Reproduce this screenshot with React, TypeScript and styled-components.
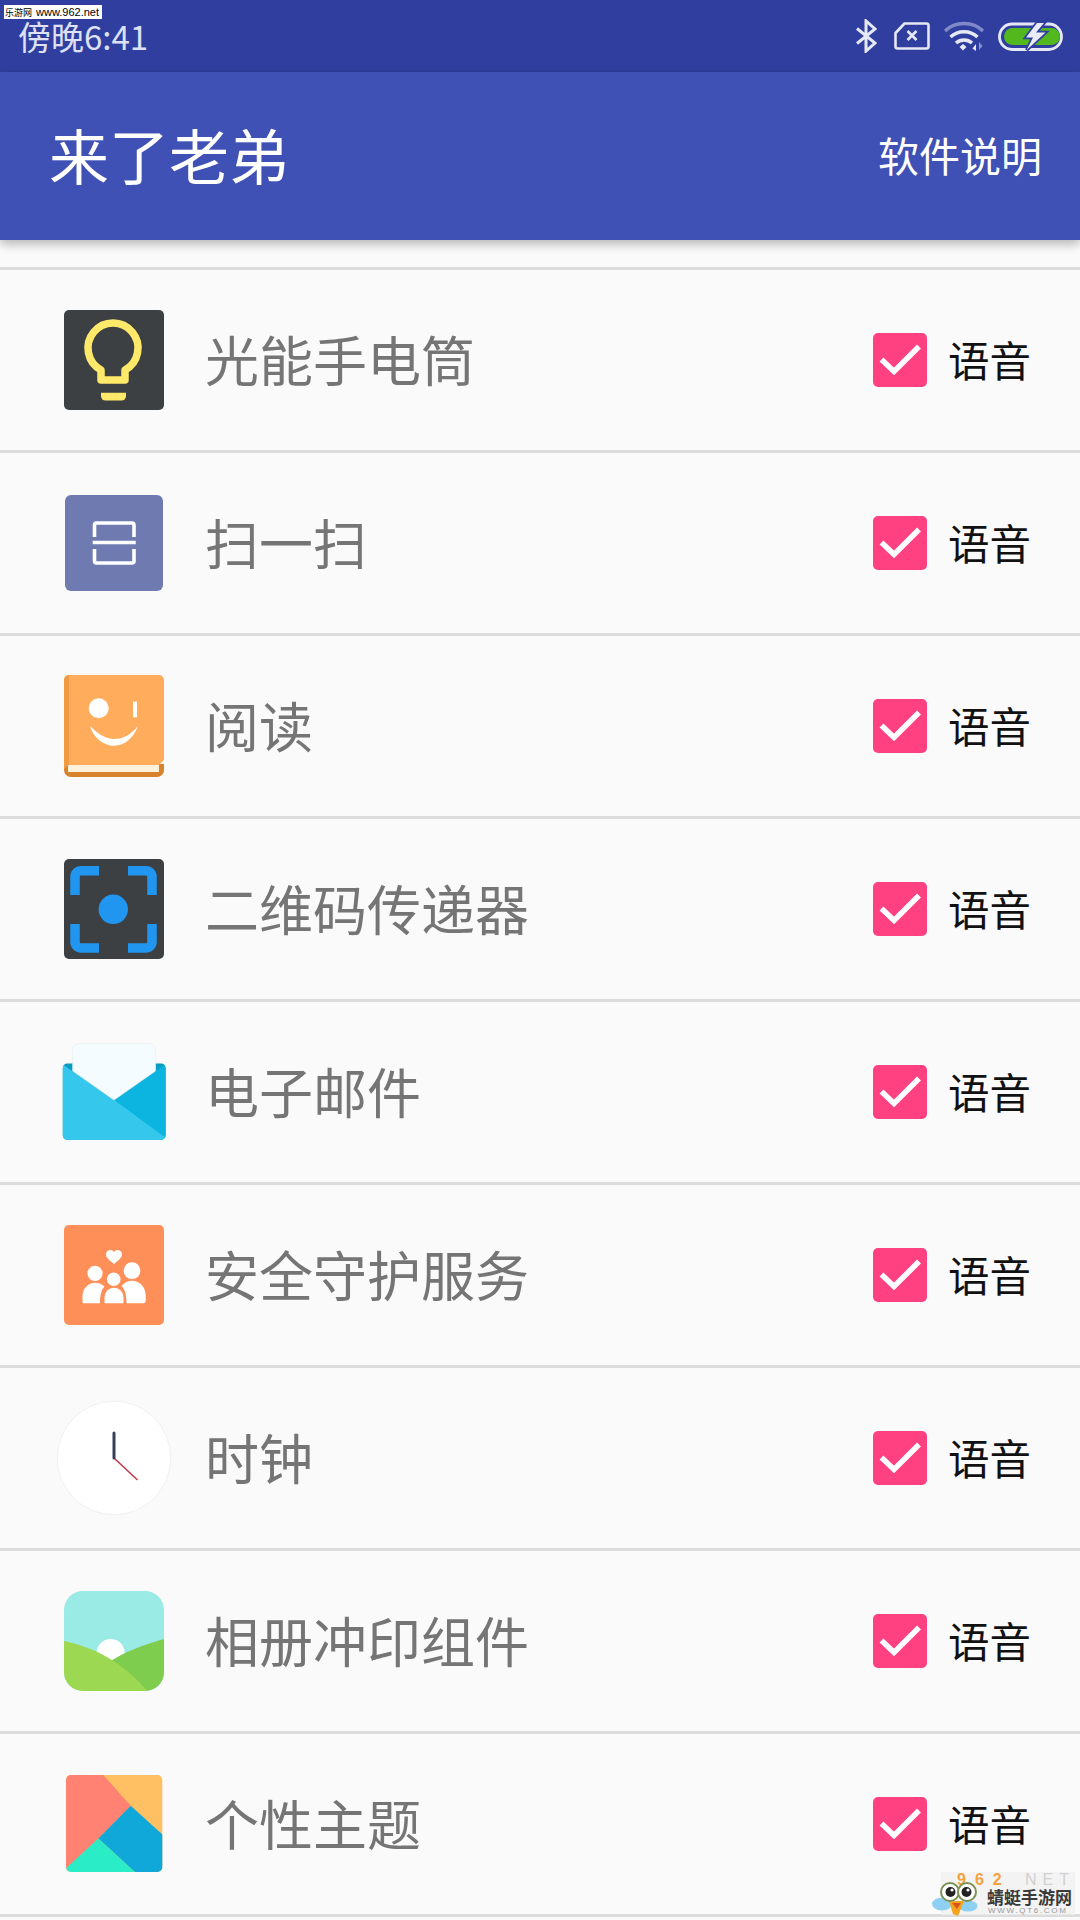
import React from "react";
import styled, { createGlobalStyle } from "styled-components";

const GlobalStyle = createGlobalStyle`
  html, body {
    margin: 0;
    padding: 0;
    background: #fafafa;
  }
  * {
    box-sizing: border-box;
  }
`;

const cjk = `"Noto Sans CJK SC", "Noto Sans", sans-serif`;

const Screen = styled.div`
  position: relative;
  width: 1080px;
  height: 1920px;
  overflow: hidden;
  background: #fafafa;
  font-family: ${cjk};
`;

const StatusBar = styled.div`
  height: 72px;
  background: #303f9f;
  display: flex;
  align-items: center;
  justify-content: space-between;
  padding: 0 16px 0 18px;
`;

const Time = styled.div`
  color: #dde1f3;
  font-size: 33px;
  line-height: 28px;
  font-family: "Noto Sans CJK SC", Roboto, sans-serif;
`;

const StatusIcons = styled.div`
  display: flex;
  align-items: center;
  gap: 13px;
`;

const SiteTag = styled.div`
  position: absolute;
  left: 4px;
  top: 5px;
  width: 98px;
  height: 14px;
  background: #fff;
  color: #000;
  font-family: "Liberation Sans", ${cjk};
  font-size: 11px;
  line-height: 14px;
  white-space: nowrap;
  padding-left: 1px;
`;

const SiteTagName = styled.span`
  font-size: 9px;
  margin-right: 4px;
`;

const Toolbar = styled.header`
  position: relative;
  height: 168px;
  background: #3f51b5;
  display: flex;
  align-items: center;
  justify-content: space-between;
  padding: 0 38px 4px 49px;
  color: #fff;
  box-shadow: 0 4px 10px rgba(0, 0, 0, 0.28);
`;

const Title = styled.div`
  font-size: 60px;
  line-height: 80px;
`;

const ToolbarAction = styled.div`
  font-size: 41px;
  line-height: 60px;
`;

const List = styled.div`
  padding-top: 27px;
`;

const Row = styled.div`
  height: 183px;
  border-top: 3px solid #dcdcdc;
  display: flex;
  align-items: center;
  padding: 0 49px 0 54px;
`;

const IconSlot = styled.svg`
  width: 120px;
  height: 120px;
  flex: none;
`;

const Label = styled.div`
  flex: 1;
  margin-left: 31px;
  padding-bottom: 3px;
  font-size: 54px;
  line-height: 70px;
  color: #757575;
`;

const CheckBox = styled.div`
  width: 54px;
  height: 54px;
  border-radius: 5px;
  background: #ff4081;
  display: flex;
  align-items: center;
  justify-content: center;
`;

const Voice = styled.div`
  margin-left: 21px;
  padding-bottom: 3px;
  font-size: 41.5px;
  line-height: 56px;
  color: #111;
`;

const Stamp = styled.div`
  position: absolute;
  right: 5px;
  bottom: 5px;
  width: 134px;
  height: 43px;
  background: rgba(240, 240, 240, 0.65);
  overflow: hidden;
`;

const StampTop = styled.div`
  display: flex;
  justify-content: space-between;
  padding: 0 0 0 16px;
  height: 15px;
  font-family: "Liberation Sans", sans-serif;
  font-size: 16px;
  line-height: 15px;
  font-weight: 700;
`;

const StampOrange = styled.span`
  color: #f5a23c;
  letter-spacing: 9px;
`;

const StampGrey = styled.span`
  color: #d0d0d0;
  font-size: 16px;
  font-weight: 400;
  letter-spacing: 6px;
`;

const StampName = styled.div`
  padding-left: 46px;
  font-size: 17px;
  line-height: 20px;
  font-weight: 700;
  color: #3a3a3a;
  white-space: nowrap;
`;

const StampUrl = styled.div`
  padding-left: 47px;
  font-family: "Liberation Sans", sans-serif;
  font-size: 8px;
  line-height: 8px;
  letter-spacing: 1.7px;
  color: #999;
  white-space: nowrap;
`;

const StampBird = styled.svg`
  position: absolute;
  right: 102px;
  bottom: 4px;
  width: 46px;
  height: 34px;
`;

const SimSvg = styled.svg`
  margin-left: 4px;
`;

const FlashlightIcon = () => (
  <IconSlot viewBox="0 0 120 120">
    <rect x="10" y="10" width="100" height="100" rx="5" fill="#3c4043" />
    <path d="M47 70A25 25 0 1 1 71 70V80H47Z" fill="none" stroke="#ffe96a" strokeWidth="7.5" strokeLinejoin="round" />
    <path d="M47 92.7H72V96a4.5 4.5 0 0 1-4.5 4.5H51.5A4.5 4.5 0 0 1 47 96Z" fill="#ffe96a" />
  </IconSlot>
);

const ScanIcon = () => (
  <IconSlot viewBox="0 0 120 120">
    <rect x="11" y="12" width="98" height="96" rx="6" fill="#6f7bb0" />
    <g fill="none" stroke="#fff" strokeWidth="3.6" strokeLinejoin="round">
      <path d="M40.5 54V42a2 2 0 0 1 2-2H78a2 2 0 0 1 2 2V54" />
      <path d="M38.7 59.5H81.7" />
      <path d="M40.5 66V78a2 2 0 0 0 2 2H78a2 2 0 0 0 2-2V66" />
    </g>
  </IconSlot>
);

const BookIcon = () => (
  <IconSlot viewBox="0 0 120 120">
    <path d="M10 98H110V104a7 7 0 0 1-7 7H17a7 7 0 0 1-7-7Z" fill="#d8822c" />
    <path d="M14 90H105V106H14Z" fill="#fdf1dc" />
    <path d="M15 9H105a5 5 0 0 1 5 5V94L105 99H14L10 103V14a5 5 0 0 1 5-5Z" fill="#ffad5c" />
    <path d="M15 9V99L10 103V14a5 5 0 0 1 5-5Z" fill="#f09a42" />
    <circle cx="44.7" cy="42.3" r="10" fill="#fff" />
    <rect x="79" y="35.7" width="4" height="15.6" fill="#fff" />
    <path d="M36 60C40 74 52 80 60 79.7C70 80 80 72 83.7 60C76 70 68 73 60 73C52 73 44 68 36 60Z" fill="#fff" />
  </IconSlot>
);

const QrIcon = () => (
  <IconSlot viewBox="0 0 120 120">
    <rect x="10" y="10" width="100" height="100" rx="5" fill="#3c4043" />
    <g fill="none" stroke="#2196f0" strokeWidth="9.5">
      <path d="M45 21.7H27a6 6 0 0 0-6 6V46" />
      <path d="M74 21.7H92a6 6 0 0 1 6 6V46" />
      <path d="M45 99H27a6 6 0 0 1-6-6V75" />
      <path d="M74 99H92a6 6 0 0 0 6-6V75" />
    </g>
    <circle cx="59.3" cy="60.3" r="14.7" fill="#2196f0" />
  </IconSlot>
);

const MailIcon = () => (
  <IconSlot viewBox="0 0 120 120">
    <defs>
      <clipPath id="mail-clip">
        <rect x="8.7" y="31.3" width="103" height="76.7" rx="5" />
      </clipPath>
    </defs>
    <g clipPath="url(#mail-clip)">
      <rect x="8.7" y="31.3" width="103" height="76.7" fill="#0b9cc1" />
      <path d="M60 68L112 32V108H60Z" fill="#0cb5df" />
      <path d="M8 32L60 68L112 106V108H8Z" fill="#35c8ec" />
    </g>
    <path d="M18.7 39V18a6.5 6.5 0 0 1 6.5-6.5H95a6.5 6.5 0 0 1 6.5 6.5V39L60 68Z" fill="#f4fcff" stroke="#e6eff1" strokeWidth="0.7" />
  </IconSlot>
);

const FamilyIcon = () => (
  <IconSlot viewBox="0 0 120 120">
    <rect x="10" y="10" width="100" height="100" rx="5" fill="#ff8f58" />
    <g fill="#fff">
      <path d="M60 49C56 45.5 52 43 52 39.5C52 34.5 58 33.5 60 37C62 33.5 68 34.5 68 39.5C68 43 64 45.5 60 49Z" />
      <circle cx="41" cy="58.3" r="7.6" />
      <circle cx="78" cy="55.7" r="8.4" />
      <circle cx="59.7" cy="64.3" r="6.8" />
      <path d="M30 88.3a1.5 1.5 0 0 1-1.5-1.5V81C28.5 73 35 67.7 41 67.7C45 67.7 48 69 50.5 71.5C47 75 46 81 46 88.3Z" />
      <path d="M50.5 88.3V83C50.5 77 54.5 72.7 60 72.7C65.5 72.7 69.5 77 69.5 83V88.3Z" />
      <path d="M72.5 88.3C72.5 81 71.5 75 67.5 71C70.5 67.5 74 65.7 78 65.7C86 65.7 91.7 72 91.7 81V86a2.3 2.3 0 0 1-2.3 2.3Z" />
    </g>
  </IconSlot>
);

const ClockIcon = () => (
  <IconSlot viewBox="0 0 120 120">
    <circle cx="60" cy="60" r="56.8" fill="#fff" stroke="#ececec" strokeWidth="0.8" />
    <path d="M60 60L83.5 82" stroke="#c23a48" strokeWidth="1.6" />
    <path d="M60 35V60" stroke="#34405c" strokeWidth="3" strokeLinecap="round" />
  </IconSlot>
);

const GalleryIcon = () => (
  <IconSlot viewBox="0 0 120 120">
    <defs>
      <clipPath id="gallery-clip">
        <rect x="10" y="10" width="100" height="100" rx="19" />
      </clipPath>
    </defs>
    <g clipPath="url(#gallery-clip)">
      <rect x="10" y="10" width="100" height="100" fill="#9aeae6" />
      <circle cx="56.7" cy="72" r="14" fill="#fff" />
      <path d="M56.7 80C72 70 92 63 110 58V110H90Z" fill="#7fcd4e" />
      <path d="M10 60C40 66 70 82 93 110H10Z" fill="#9dd852" />
    </g>
  </IconSlot>
);

const ThemeIcon = () => (
  <IconSlot viewBox="0 0 120 120">
    <defs>
      <clipPath id="theme-clip">
        <rect x="12" y="11" width="96.3" height="97" rx="5" />
      </clipPath>
    </defs>
    <g clipPath="url(#theme-clip)">
      <rect x="12" y="11" width="97" height="98" fill="#ffc064" />
      <path d="M12 11H49.3L76.7 41.8L44.3 74.6L12 106Z" fill="#ff8272" />
      <path d="M76.7 41.8L109 71V109H82L44.3 74.6Z" fill="#0fa8d8" />
      <path d="M44.3 74.6L82 109H10V106Z" fill="#2aedc8" />
    </g>
  </IconSlot>
);

const CheckMark = () => (
  <svg width="54" height="54" viewBox="0 0 54 54">
    <path d="M8.5 26.5L21 38.5L46 13.5" fill="none" stroke="#fff" strokeWidth="5.5" />
  </svg>
);

const BluetoothGlyph = () => (
  <svg width="22" height="34" viewBox="0 0 22 34">
    <path d="M2 9.5L20 24L11 32V2L20 10L2 24.5" fill="none" stroke="#e6e8f6" strokeWidth="3" />
  </svg>
);

const SimGlyph = () => (
  <SimSvg width="36" height="28" viewBox="0 0 36 28">
    <path d="M10.5 1.5H32.5a2 2 0 0 1 2 2V24.5a2 2 0 0 1-2 2H3.5a2 2 0 0 1-2-2V11Z" fill="none" stroke="#e6e8f6" strokeWidth="2.6" strokeLinejoin="round" />
    <path d="M13.5 9L22.5 18M22.5 9L13.5 18" stroke="#e6e8f6" strokeWidth="2.6" />
  </SimSvg>
);

const WifiGlyph = () => (
  <svg width="42" height="32" viewBox="0 0 42 32">
    <path d="M2 11C12 1 30 1 40 11" fill="none" stroke="#7f89c9" strokeWidth="3.4" />
    <path d="M7.5 17C15 10 27 10 34.5 17" fill="none" stroke="#e6e8f6" strokeWidth="3.4" />
    <path d="M13 23C17.5 19 24.5 19 29 23" fill="none" stroke="#e6e8f6" strokeWidth="3.4" />
    <path d="M16.5 27L20 24L23.5 27L20 30.5Z" fill="#e6e8f6" />
    <path d="M33 24V31L29.5 28.5Z" fill="#e6e8f6" />
    <path d="M36 22V30L39.5 26Z" fill="#8a93cf" />
  </svg>
);

const BatteryGlyph = () => (
  <svg width="66" height="32" viewBox="0 0 66 32">
    <rect x="1.5" y="4" width="62" height="25.5" rx="12.7" fill="none" stroke="#e6e8f6" strokeWidth="2.8" />
    <rect x="6" y="8" width="56" height="17" rx="8.5" fill="#52b81d" />
    <path d="M39 3L28 17.5H35L28.7 30L47.5 12.5H38L46 3Z" fill="#e9ebf8" stroke="#303f9f" strokeWidth="3.5" paintOrder="stroke" />
  </svg>
);

const BirdGlyph = () => (
  <StampBird viewBox="0 0 46 34">
    <ellipse cx="10" cy="22" rx="10" ry="6.5" fill="#8ed0f2" />
    <ellipse cx="36" cy="24" rx="9.5" ry="5.5" fill="#8ed0f2" />
    <path d="M17 19L32 19L26 34L21 32Z" fill="#f3a51f" />
    <path d="M20 21H29L25 27Z" fill="#d9541e" />
    <circle cx="18" cy="10" r="9" fill="#fff" stroke="#7f9256" strokeWidth="2" />
    <circle cx="35" cy="10" r="9" fill="#fff" stroke="#7f9256" strokeWidth="2" />
    <circle cx="18.5" cy="10" r="5" fill="#222" />
    <circle cx="34.5" cy="10" r="5" fill="#222" />
    <circle cx="20" cy="8" r="1.6" fill="#fff" />
    <circle cx="36" cy="8" r="1.6" fill="#fff" />
  </StampBird>
);

const items = [
  { name: "光能手电筒", Icon: FlashlightIcon },
  { name: "扫一扫", Icon: ScanIcon },
  { name: "阅读", Icon: BookIcon },
  { name: "二维码传递器", Icon: QrIcon },
  { name: "电子邮件", Icon: MailIcon },
  { name: "安全守护服务", Icon: FamilyIcon },
  { name: "时钟", Icon: ClockIcon },
  { name: "相册冲印组件", Icon: GalleryIcon },
  { name: "个性主题", Icon: ThemeIcon },
];

export default function App() {
  return (
    <Screen>
      <GlobalStyle />
      <StatusBar>
        <Time>傍晚6:41</Time>
        <StatusIcons>
          <BluetoothGlyph />
          <SimGlyph />
          <WifiGlyph />
          <BatteryGlyph />
        </StatusIcons>
      </StatusBar>
      <SiteTag>
        <SiteTagName>乐游网</SiteTagName>www.962.net
      </SiteTag>
      <Toolbar>
        <Title>来了老弟</Title>
        <ToolbarAction>软件说明</ToolbarAction>
      </Toolbar>
      <List>
        {items.map(({ name, Icon }) => (
          <Row key={name}>
            <Icon />
            <Label>{name}</Label>
            <CheckBox>
              <CheckMark />
            </CheckBox>
            <Voice>语音</Voice>
          </Row>
        ))}
        <Row />
      </List>
      <Stamp>
        <StampTop>
          <StampOrange>962</StampOrange>
          <StampGrey>NET</StampGrey>
        </StampTop>
        <StampName>蜻蜓手游网</StampName>
        <StampUrl>WWW.QT6.COM</StampUrl>
      </Stamp>
      <BirdGlyph />
    </Screen>
  );
}
